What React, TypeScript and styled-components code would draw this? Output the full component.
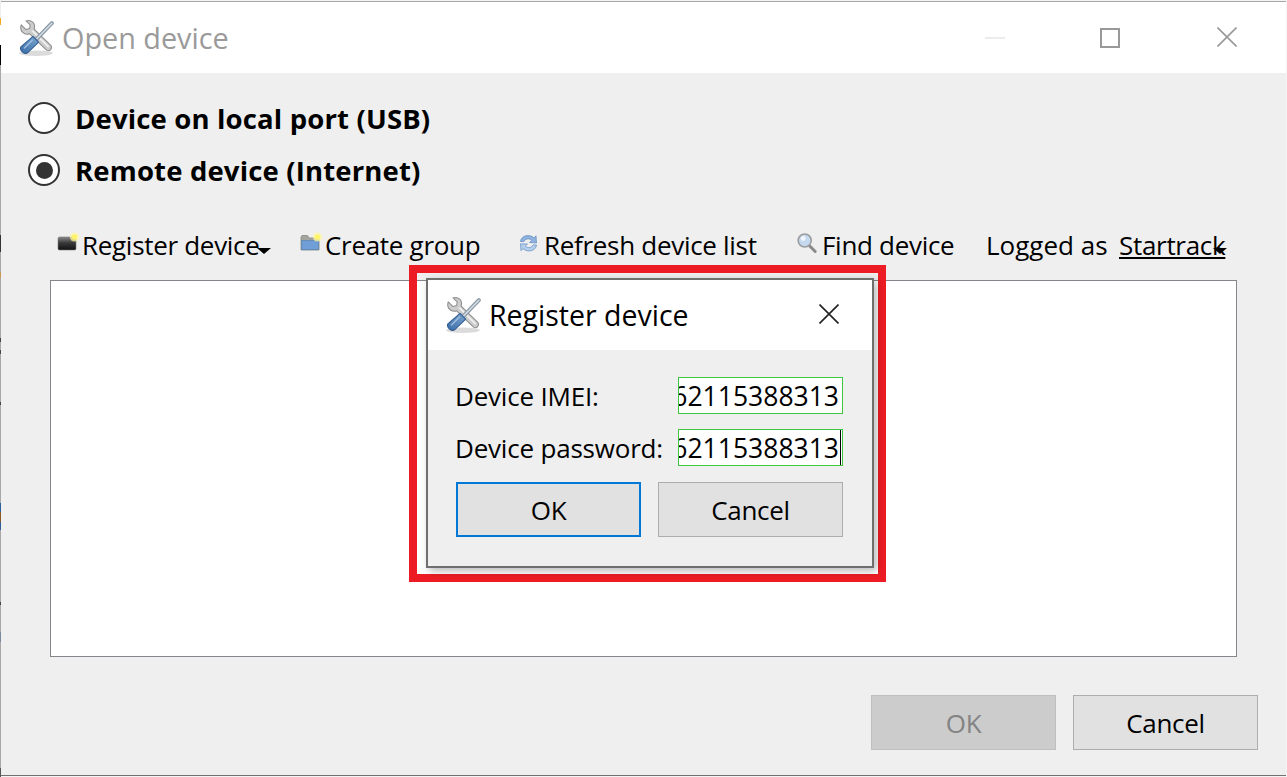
import React from 'react';
import styled, { createGlobalStyle } from 'styled-components';

const GlobalStyle = createGlobalStyle`
	html, body {
		margin: 0;
		padding: 0;
		background: #f4f4f4;
		overflow: hidden;
	}

	* {
		box-sizing: border-box;
	}
`;

const Page = styled.div`
	width: 1287px;
	height: 777px;
	padding-top: 1px;
	position: relative;
	font-family: "Open Sans", "Noto Sans", sans-serif;
	color: #000;
`;

const BackdropEdge = styled.div`
	position: absolute;
	left: 0;
	top: 0;
	width: 1px;
	height: 777px;
	background: linear-gradient(
		to bottom,
		#eee 0 18px,
		#f5a623 18px 25px,
		#fff 25px 45px,
		#000 45px 65px,
		#a8a8a8 65px 235px,
		#333 235px 252px,
		#a8a8a8 252px 272px,
		#c99a55 272px 278px,
		#a8a8a8 278px 338px,
		#444 338px 342px,
		#a8a8a8 342px 350px,
		#444 350px 354px,
		#a8a8a8 354px 402px,
		#444 402px 405px,
		#a8a8a8 405px 503px,
		#2f5f9a 503px 512px,
		#8a5a20 512px 522px,
		#2f5f9a 522px 530px,
		#a8a8a8 530px 602px,
		#444 602px 605px,
		#a8a8a8 605px 632px,
		#7b8a9a 632px 642px,
		#a8a8a8 642px 768px,
		#555 768px 777px
	);
`;

const WindowFrame = styled.div`
	width: 1286px;
	height: 775px;
	border-top: 1px solid #a6a6a6;
	border-left: 1px solid #a8a8a8;
	border-bottom: 1px solid #707070;
	background: #efefef;
	display: flex;
	flex-direction: column;
`;

const TitleBar = styled.div`
	height: 71px;
	flex: none;
	background: #fff;
	display: flex;
	align-items: center;
	padding: 0 49px 0 16px;
`;

const TitleText = styled.span`
	font-size: 28.8px;
	color: #9a9a9a;
	margin-left: 7px;
	flex: 1;
`;

const WindowControls = styled.div`
	display: flex;
	align-items: center;
	gap: 95px;
`;

const MinimizeGlyph = styled.div`
	width: 20px;
	height: 2px;
	background: #ececec;
`;

const MaximizeGlyph = styled.div`
	width: 20px;
	height: 20px;
	border: 2px solid #999;
	margin-right: 2px;
`;

const Body = styled.div`
	flex: 1;
	display: flex;
	flex-direction: column;
	padding: 19px 28px 25px 27px;
`;

const RadioRow = styled.div`
	height: 52px;
	display: flex;
	align-items: center;
	gap: 15px;
	font-size: 27.5px;
	font-weight: 700;
	letter-spacing: 0.16px;
`;

const RadioCircle = styled.div`
	width: 32px;
	height: 32px;
	border-radius: 50%;
	border: 2px solid #333;
	background: #fff;
	display: flex;
	align-items: center;
	justify-content: center;
`;

const RadioDot = styled.div`
	width: 17px;
	height: 17px;
	border-radius: 50%;
	background: #333;
`;

const Toolbar = styled.div`
	margin: 24px 0 0 29px;
	height: 50px;
	display: flex;
	align-items: center;
	font-size: 26px;
	letter-spacing: -0.3px;
	white-space: nowrap;
`;

const ToolItem = styled.div<{ $width: number }>`
	width: ${(p) => p.$width}px;
	flex: none;
	display: flex;
	align-items: center;
	gap: 3px;
	position: relative;
`;

const ToolIcon = styled.svg`
	width: 22px;
	height: 22px;
	flex: none;
	margin-top: -5px;
`;

const DropArrow = styled.span<{ $right: number }>`
	position: absolute;
	right: ${(p) => p.$right}px;
	top: 21px;
	width: 0;
	height: 0;
	border-left: 7px solid transparent;
	border-right: 7px solid transparent;
	border-top: 6px solid #000;
`;

const LoggedLabel = styled.span`
	width: 133px;
	flex: none;
	letter-spacing: 0;
`;

const UserLink = styled.span`
	position: relative;
	display: inline-block;
	width: 107px;
	text-decoration: underline;
`;

const DeviceList = styled.div`
	margin: 10px 0 0 22px;
	width: 1187px;
	height: 377px;
	flex: none;
	background: #fff;
	border: 1px solid #85868c;
`;

const Footer = styled.div`
	margin-top: auto;
	display: flex;
	justify-content: flex-end;
	gap: 17px;
`;

const Button = styled.div<{ $variant?: 'default' | 'focus' | 'disabled' }>`
	width: 185px;
	height: 55px;
	display: flex;
	align-items: center;
	justify-content: center;
	font-size: 26px;
	letter-spacing: -0.3px;
	background: ${(p) => (p.$variant === 'disabled' ? '#ccc' : '#e1e1e1')};
	color: ${(p) => (p.$variant === 'disabled' ? '#838383' : '#000')};
	border: ${(p) =>
		p.$variant === 'focus'
			? '2px solid #0078d7'
			: p.$variant === 'disabled'
				? '1px solid #bfbfbf'
				: '1px solid #adadad'};
`;

const Highlight = styled.div`
	position: absolute;
	left: 409px;
	top: 265px;
	width: 477px;
	height: 317px;
	border: 8px solid #ed1c24;
`;

const Dialog = styled.div`
	position: absolute;
	left: 426px;
	top: 278px;
	width: 448px;
	height: 290px;
	background: #efefef;
	border: 2px solid #6f6f6f;
	box-shadow: 3px 3px 8px rgba(0, 0, 0, 0.28);
	display: flex;
	flex-direction: column;
`;

const DialogTitleBar = styled.div`
	height: 70px;
	flex: none;
	background: #fff;
	display: flex;
	align-items: center;
	padding: 0 33px 0 16px;
`;

const DialogTitle = styled.span`
	font-size: 28.5px;
	margin-left: 7px;
	flex: 1;
`;

const CloseIcon = styled.svg`
	width: 20px;
	height: 20px;
	flex: none;
	margin-top: -2px;
`;

const DialogBody = styled.div`
	flex: 1;
	padding: 27px 28px 0 27px;
	font-size: 26px;
	letter-spacing: -0.2px;
`;

const FieldGrid = styled.div`
	display: grid;
	grid-template-columns: 223px 165px;
	row-gap: 15px;
	align-items: center;
`;

const FieldInput = styled.div`
	height: 37px;
	background: #fff;
	border: 1px solid #3fc63f;
	display: flex;
	justify-content: flex-end;
	align-items: center;
	overflow: hidden;
	white-space: nowrap;
	padding-right: 3px;
	font-size: 26.5px;
	letter-spacing: 0;
	position: relative;
`;

const Caret = styled.span`
	position: absolute;
	right: 1px;
	top: 0;
	bottom: 0;
	width: 1px;
	background: #000;
`;

const DialogButtons = styled.div`
	margin-top: 16px;
	display: flex;
	gap: 17px;
	padding-left: 1px;
`;

const ToolsGraphic = styled.svg`
	width: 38px;
	height: 38px;
	flex: none;
	filter: blur(0.35px);
`;

const ToolsIcon = ({ id }: { id: string }) => (
	<ToolsGraphic viewBox="0 0 36 36">
		<defs>
			<linearGradient id={`${id}-blue`} x1="0" y1="1" x2="1" y2="0">
				<stop offset="0" stopColor="#3a6ca8" />
				<stop offset="1" stopColor="#7ba5cf" />
			</linearGradient>
		</defs>
		<ellipse cx="18" cy="32.5" rx="16" ry="2.6" fill="#000" opacity="0.14" />
		<path
			d="M4 5.5 L8.5 10 L12 9 L12.5 5.5 L8.5 1.8 C13.5 0.2 18 4 16.2 9.5 L32 25 C34 27.5 31 31.5 28 29.5 L12 14 C7 15.8 2 11.5 4 5.5 Z"
			fill="#cdcdcd"
			stroke="#8e8e8e"
			strokeWidth="1"
			strokeLinejoin="round"
		/>
		<path d="M14.5 11 L30 26.5" stroke="#f2f2f2" strokeWidth="1.6" />
		<path d="M33 4 L18 19.5" stroke="#8d9aa8" strokeWidth="3.8" strokeLinecap="round" />
		<path d="M33 4 L18 19.5" stroke="#d5dde5" strokeWidth="1.4" strokeLinecap="round" />
		<path
			d="M15.2 16.5 L20.5 21.8 L10 32 C7.5 33.8 2 30 3.6 26.5 Z"
			fill={`url(#${id}-blue)`}
			stroke="#2f5c92"
			strokeWidth="1"
			strokeLinejoin="round"
		/>
		<path d="M14.5 20 L7 27.5" stroke="#9dbfe0" strokeWidth="1.4" strokeLinecap="round" />
	</ToolsGraphic>
);

const Sparkle = () => (
	<>
		<circle cx="17.5" cy="5" r="4.6" fill="#fdf7a0" opacity="0.75" />
		<circle cx="17.5" cy="5" r="2.6" fill="#fff36a" />
	</>
);

const DeviceAddIcon = () => (
	<ToolIcon viewBox="0 0 22 22">
		<defs>
			<linearGradient id="dev-body" x1="0" y1="0" x2="0" y2="1">
				<stop offset="0" stopColor="#8a8a8a" />
				<stop offset="0.45" stopColor="#3a3a3a" />
				<stop offset="1" stopColor="#111" />
			</linearGradient>
		</defs>
		<rect x="1" y="5" width="18" height="13" rx="1.5" fill="url(#dev-body)" stroke="#777" strokeWidth="0.6" />
		<Sparkle />
	</ToolIcon>
);

const FolderAddIcon = () => (
	<ToolIcon viewBox="0 0 22 22">
		<path d="M1 5 L1 18 L19 18 L19 6 L9 6 L7.5 3.5 L2 3.5 Z" fill="#a5a5a0" stroke="#80807c" strokeWidth="0.7" />
		<path d="M1.6 8.5 L18.6 8.5 L18.6 17.6 L1.6 17.6 Z" fill="#6f9fd6" stroke="#4f7fb6" strokeWidth="0.6" />
		<Sparkle />
	</ToolIcon>
);

const RefreshIcon = () => (
	<ToolIcon viewBox="1.5 0 22 22">
		<path d="M3 9.5 C3.5 3.5 12 1.5 16.5 6 L18.5 3.8 L19 11 L12 10.5 L14.2 8.4 C11.5 5.8 7.5 6.8 6.5 9.5 Z" fill="#8fb3de" stroke="#5f8abf" strokeWidth="0.7" />
		<path d="M19 13 C18.5 19 10 21 5.5 16.5 L3.5 18.7 L3 11.8 L10 12 L7.8 14.1 C10.5 16.7 14.5 15.7 15.5 13 Z" fill="#b5cfec" stroke="#5f8abf" strokeWidth="0.7" />
	</ToolIcon>
);

const SearchIcon = () => (
	<ToolIcon viewBox="0.8 0 22 22">
		<line x1="12.5" y1="13" x2="19" y2="19.5" stroke="#8a8a8a" strokeWidth="3" strokeLinecap="round" />
		<circle cx="8.5" cy="8.5" r="6.5" fill="#c5d9f0" stroke="#9c9c9c" strokeWidth="1.6" />
		<circle cx="7" cy="6.5" r="2.4" fill="#f2f7fd" />
	</ToolIcon>
);

const CrossGlyph = ({ colour }: { colour: string }) => (
	<CloseIcon viewBox="0 0 20 20">
		<path d="M0.5 0.5 L19.5 19.5 M19.5 0.5 L0.5 19.5" stroke={colour} strokeWidth="1.6" />
	</CloseIcon>
);

const App = () => (
	<>
		<GlobalStyle />
		<Page>
			<WindowFrame>
				<TitleBar>
					<ToolsIcon id="main" />
					<TitleText>Open device</TitleText>
					<WindowControls>
						<MinimizeGlyph />
						<MaximizeGlyph />
						<CrossGlyph colour="#999" />
					</WindowControls>
				</TitleBar>
				<Body>
					<RadioRow>
						<RadioCircle />
						Device on local port (USB)
					</RadioRow>
					<RadioRow>
						<RadioCircle>
							<RadioDot />
						</RadioCircle>
						Remote device (Internet)
					</RadioRow>
					<Toolbar>
						<ToolItem $width={243}>
							<DeviceAddIcon />
							Register device
							<DropArrow $right={29} />
						</ToolItem>
						<ToolItem $width={219}>
							<FolderAddIcon />
							Create group
						</ToolItem>
						<ToolItem $width={278}>
							<RefreshIcon />
							Refresh device list
						</ToolItem>
						<ToolItem $width={189}>
							<SearchIcon />
							Find device
						</ToolItem>
						<LoggedLabel>Logged as</LoggedLabel>
						<UserLink>
							Startrack
							<DropArrow $right={-1} />
						</UserLink>
					</Toolbar>
					<DeviceList />
					<Footer>
						<Button $variant="disabled">OK</Button>
						<Button>Cancel</Button>
					</Footer>
				</Body>
			</WindowFrame>
			<BackdropEdge />
			<Highlight />
			<Dialog>
				<DialogTitleBar>
					<ToolsIcon id="dlg" />
					<DialogTitle>Register device</DialogTitle>
					<CrossGlyph colour="#222" />
				</DialogTitleBar>
				<DialogBody>
					<FieldGrid>
						<span>Device IMEI:</span>
						<FieldInput>62115388313</FieldInput>
						<span>Device password:</span>
						<FieldInput>
							62115388313
							<Caret />
						</FieldInput>
					</FieldGrid>
					<DialogButtons>
						<Button $variant="focus">OK</Button>
						<Button>Cancel</Button>
					</DialogButtons>
				</DialogBody>
			</Dialog>
		</Page>
	</>
);

export default App;
